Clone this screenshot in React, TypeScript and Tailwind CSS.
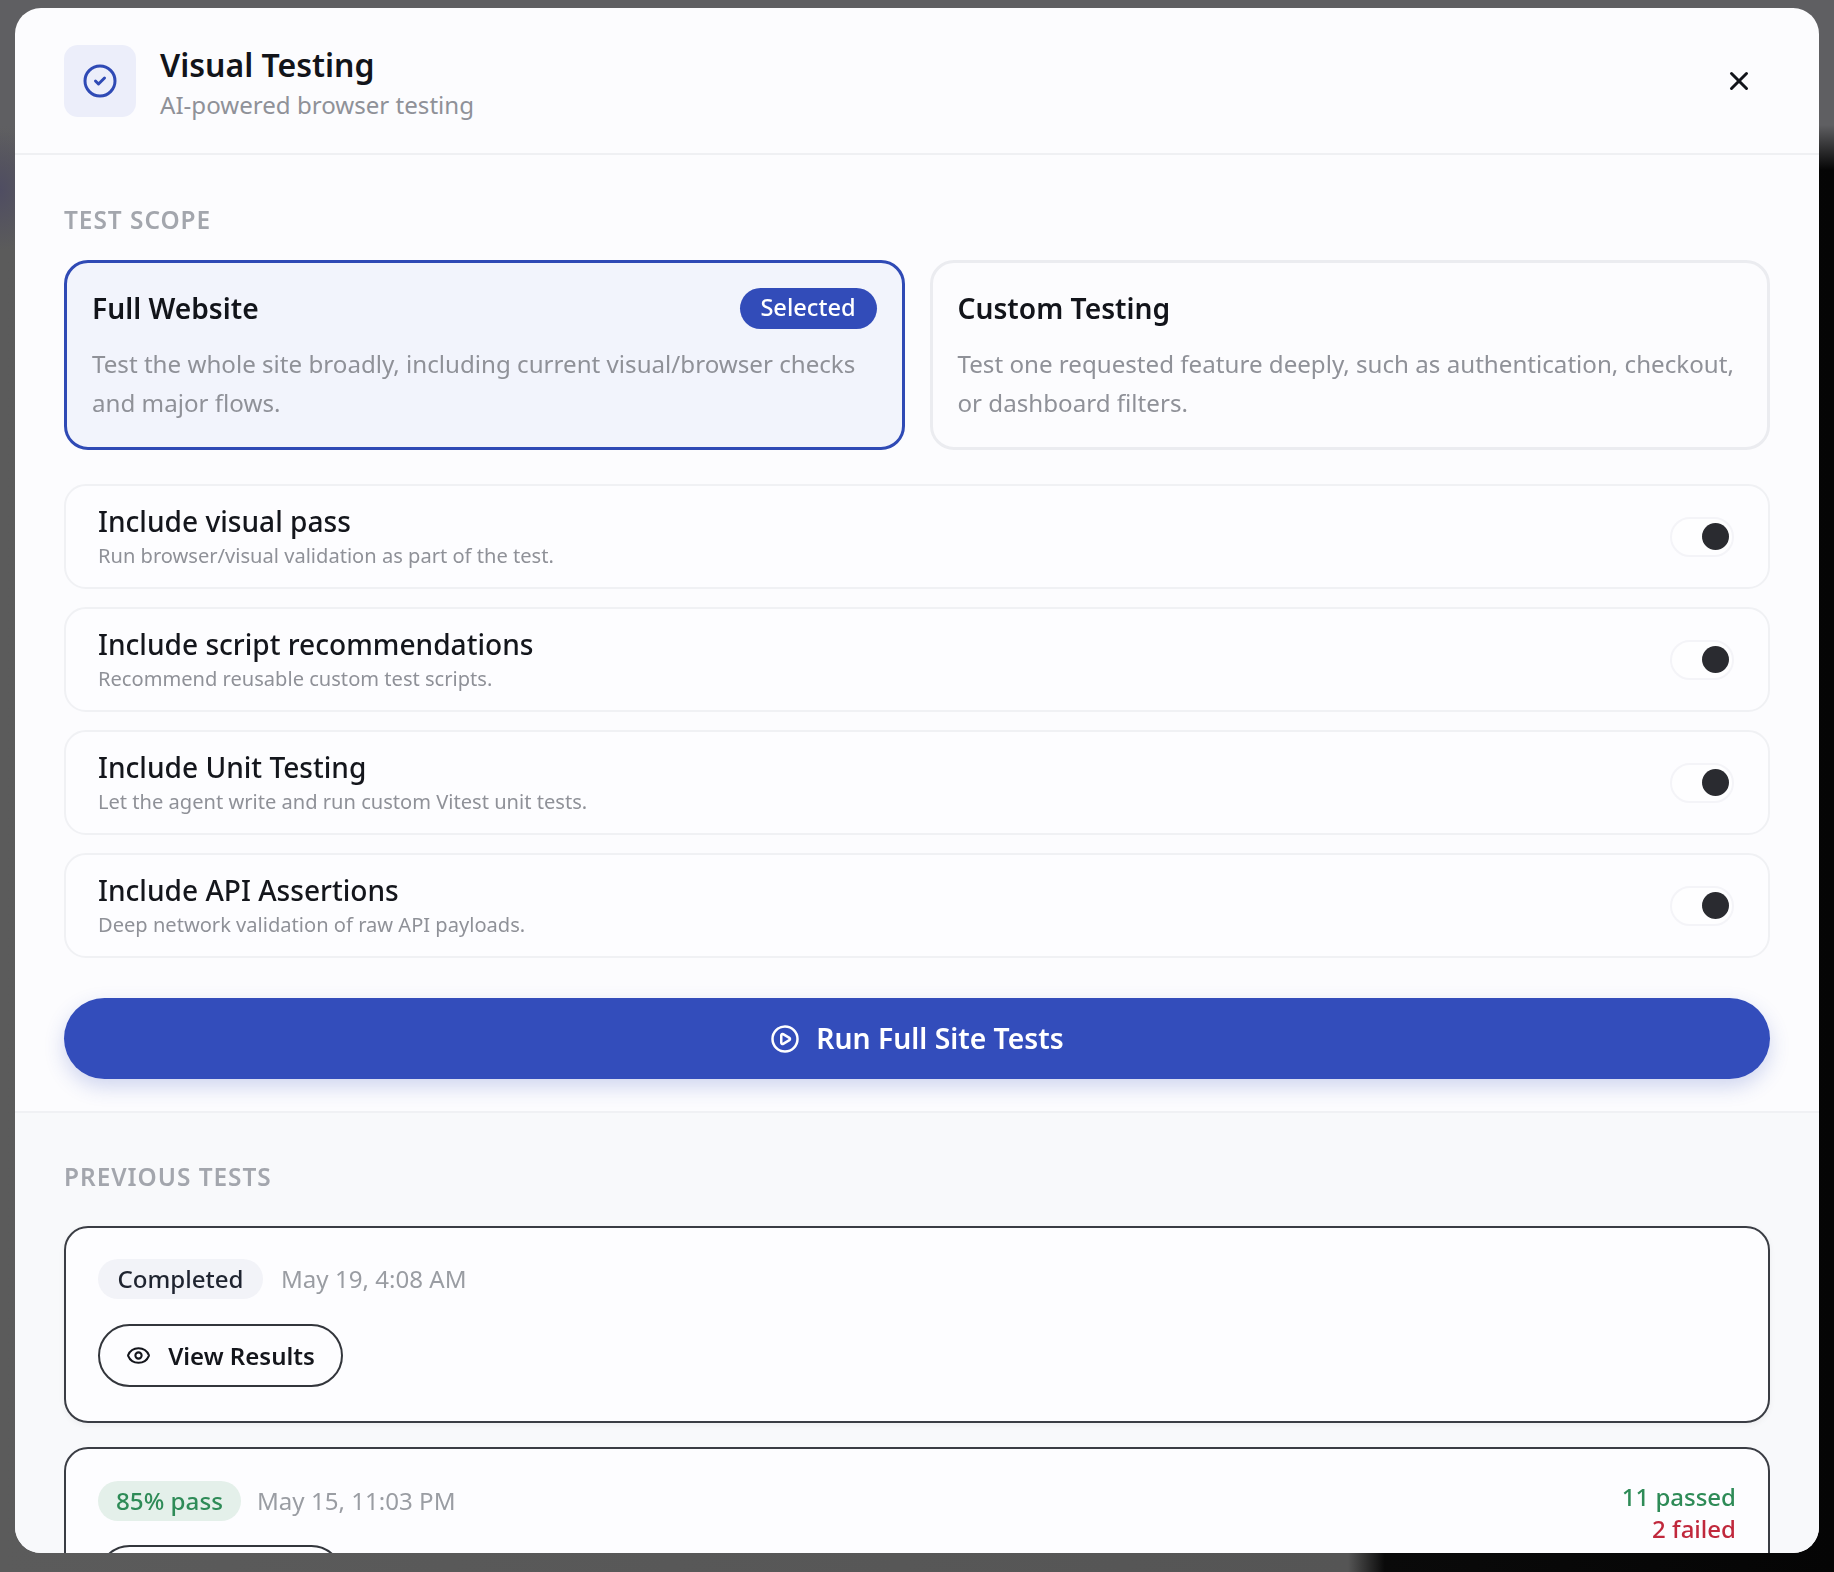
import { CircleCheck, CirclePlay, Eye, X } from "lucide-react";

const font = "font-['Noto_Sans',sans-serif]";

const options = [
  { title: "Include visual pass", desc: "Run browser/visual validation as part of the test." },
  { title: "Include script recommendations", desc: "Recommend reusable custom test scripts." },
  { title: "Include Unit Testing", desc: "Let the agent write and run custom Vitest unit tests." },
  { title: "Include API Assertions", desc: "Deep network validation of raw API payloads." },
];

function ScopeCard({
  title,
  desc,
  selected,
}: {
  title: string;
  desc: string;
  selected?: boolean;
}) {
  return (
    <div
      className={
        selected
          ? "h-[190px] min-w-0 flex-1 rounded-[24px] border-[3.5px] border-[#2f4ab5] bg-[#f2f4fc] px-[25px] pt-[25px]"
          : "h-[190px] min-w-0 flex-1 rounded-[24px] border-[3.5px] border-[#ebecf0] bg-[#fcfcfe] px-[25px] pt-[25px]"
      }
    >
      <div className="flex h-[40px] items-center justify-between">
        <h3 className="text-[28.2px] font-semibold text-[#12141a]">{title}</h3>
        {selected && (
          <span className="flex h-[41px] w-[137px] items-center justify-center rounded-full bg-[#324cb9] text-[23.6px] font-medium text-white">
            Selected
          </span>
        )}
      </div>
      <p className="mt-[16px] text-[24.15px] leading-[39px] text-[#8f9198]">{desc}</p>
    </div>
  );
}

function OptionRow({ title, desc }: { title: string; desc: string }) {
  return (
    <div className="flex h-[105px] items-center justify-between rounded-[22px] border-2 border-[#f0f1f4] bg-[#fdfdff] pr-[34px] pl-[32px]">
      <div>
        <div className="text-[28.1px] leading-[38px] font-medium text-[#14161c]">{title}</div>
        <div className="mt-[1px] text-[20.1px] leading-[30px] text-[#8f9198]">{desc}</div>
      </div>
      <div className="flex h-[40px] w-[64px] items-center justify-end rounded-full border-2 border-[#f4f4f8] bg-[#fefeff] pr-[3px]">
        <div className="h-[27px] w-[27px] rounded-full bg-[#2a2b30]" />
      </div>
    </div>
  );
}

function ViewResults() {
  return (
    <button className="flex h-[63px] w-[245px] shrink-0 items-center justify-center gap-[17px] rounded-full border-2 border-[#33363c] bg-[#fdfdff] text-[24px] font-semibold text-[#14161c]">
      <Eye className="h-[25px] w-[25px]" strokeWidth={2} />
      View Results
    </button>
  );
}

export default function App() {
  return (
    <div
      className={`${font} flex h-[1572px] w-[1834px] overflow-hidden bg-[radial-gradient(40px_60px_at_0px_190px,#4f4d62,transparent),linear-gradient(180deg,#5f5f62_0px,#5f5f62_125px,transparent_170px),linear-gradient(90deg,#5b5b5b_0%,#555_73.5%,#0a0a0a_75.5%,#050505_100%)] pt-[8px] pr-[15px] pb-[19px] pl-[15px]`}
    >
      <div className="flex min-h-0 flex-1 flex-col overflow-hidden rounded-[26px] bg-[#fcfcfe] blur-[0.4px]">
        <header className="flex h-[147px] shrink-0 items-center border-b-2 border-[#eff0f3] pr-[65px] pl-[49px]">
          <div className="flex h-[72px] w-[72px] items-center justify-center rounded-[14px] bg-[#eceefa]">
            <CircleCheck className="h-[36px] w-[36px] text-[#2f4ab5]" strokeWidth={2} />
          </div>
          <div className="mt-[3px] ml-[24px] flex-1">
            <h1 className="text-[32px] leading-[44px] font-semibold text-[#12141a]">Visual Testing</h1>
            <p className="mt-[1px] text-[24.1px] leading-[34px] text-[#8f9198]">AI-powered browser testing</p>
          </div>
          <X className="h-[30px] w-[30px] text-[#12141a]" strokeWidth={2.4} />
        </header>

        <section className="shrink-0 border-b-2 border-[#f0f1f4] px-[49px] pt-[49px] pb-[32px]">
          <h2 className="text-[24.4px] leading-[32px] font-semibold tracking-[0.04em] text-[#a3a6ad]">TEST SCOPE</h2>
          <div className="mt-[24px] flex gap-[25px]">
            <ScopeCard
              selected
              title="Full Website"
              desc="Test the whole site broadly, including current visual/browser checks and major flows."
            />
            <ScopeCard
              title="Custom Testing"
              desc="Test one requested feature deeply, such as authentication, checkout, or dashboard filters."
            />
          </div>
          <div className="mt-[34px] flex flex-col gap-[18px]">
            {options.map((o) => (
              <OptionRow key={o.title} title={o.title} desc={o.desc} />
            ))}
          </div>
          <button className="mt-[40px] flex h-[81px] w-full items-center justify-center gap-[16px] rounded-full bg-[#334dbb] text-[28.3px] font-semibold text-white shadow-[0_8px_20px_rgba(51,77,187,0.22)]">
            <CirclePlay className="h-[30px] w-[30px]" strokeWidth={2} />
            Run Full Site Tests
          </button>
        </section>

        <section className="min-h-0 flex-1 overflow-hidden bg-[#f8f9fb] px-[49px] pt-[48px]">
          <h2 className="text-[24.4px] leading-[32px] font-semibold tracking-[0.04em] text-[#a3a6ad]">PREVIOUS TESTS</h2>
          <div className="mt-[33px] flex flex-col gap-[24px]">
            <div className="h-[197px] rounded-[24px] border-2 border-[#3a3d44] bg-[#fdfdff] px-[32px] pt-[31px] shadow-[0_2px_6px_rgba(0,0,0,0.05)]">
              <div className="flex items-center gap-[18px]">
                <span className="flex h-[40px] w-[165px] items-center justify-center rounded-full bg-[#f2f3f8] text-[24.1px] font-medium text-[#1f2430]">
                  Completed
                </span>
                <span className="text-[24.1px] text-[#9a9da3]">May 19, 4:08 AM</span>
              </div>
              <div className="mt-[25px]">
                <ViewResults />
              </div>
            </div>
            <div className="h-[196px] shrink-0 rounded-[24px] border-2 border-[#3a3d44] bg-[#fdfdff] px-[32px] pt-[26px]">
              <div className="flex items-start justify-between">
                <div className="mt-[6px] flex items-center gap-[16px]">
                  <span className="flex h-[40px] w-[143px] items-center justify-center rounded-full bg-[#e4f0ea] text-[24.2px] font-medium text-[#2e8b57]">
                    85% pass
                  </span>
                  <span className="text-[24.1px] text-[#9a9da3]">May 15, 11:03 PM</span>
                </div>
                <div className="mt-[6px] text-right text-[24px] leading-[32px] font-medium">
                  <div className="text-[#2e8b57]">11 passed</div>
                  <div className="text-[#c0283c]">2 failed</div>
                </div>
              </div>
              <ViewResults />
            </div>
          </div>
        </section>
      </div>
    </div>
  );
}
